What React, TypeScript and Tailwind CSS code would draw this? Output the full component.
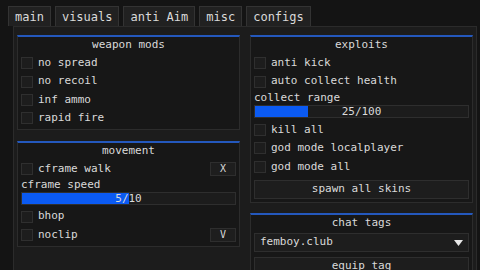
import React from "react";

const Check = ({ label, right }: { label: string; right?: React.ReactNode }) => (
  <div className="flex h-[18.4px] shrink-0 items-center">
    <div className="h-[12px] w-[12px] border border-[#2f2f2f] bg-[#1d1d1d]" />
    <span className="ml-[5px] flex-1">{label}</span>
    {right}
  </div>
);

const Slider = ({ value, max }: { value: number; max: number }) => (
  <div className="relative h-[13px] shrink-0 border border-[#2e2e2e] bg-[#1c1c1c]">
    <div className="h-full bg-[#0b5af2]" style={{ width: `${(value / max) * 100}%` }} />
    <span className="absolute inset-0 flex items-center justify-center leading-none">
      {value}/{max}
    </span>
  </div>
);

const Key = ({ k }: { k: string }) => (
  <div className="flex h-[14px] w-[26px] items-center justify-center border border-[#2e2e2e] bg-[#1e1e1e] text-[10px] leading-none">
    {k}
  </div>
);

const Button = ({ label }: { label: string }) => (
  <div className="flex h-[19px] shrink-0 items-center justify-center border border-[#2e2e2e] bg-[#1d1d1d]">
    {label}
  </div>
);

const Box = ({
  title,
  children,
  className,
}: {
  title: string;
  children: React.ReactNode;
  className?: string;
}) => (
  <div
    className={
      "flex shrink-0 flex-col border border-t-2 border-[#2c2c2c] border-t-[#2458bd] bg-[#171717] px-[3px] " +
      (className ?? "")
    }
  >
    <div className="flex h-[17px] shrink-0 items-center justify-center">{title}</div>
    {children}
  </div>
);

export default function App() {
  const tabs = ["main", "visuals", "anti Aim", "misc", "configs"];
  return (
    <div className="h-[270px] w-[480px] overflow-hidden bg-[#141414] pl-[8px] pt-[6px] font-['DejaVu_Sans_Mono',monospace] text-[11px] text-[#dadada]">
      <div className="flex h-[20px] gap-[4px]">
        {tabs.map((t) => (
          <div
            key={t}
            className="flex items-center border border-b-0 border-[#333] bg-[#212121] px-[6px] text-[12px]"
          >
            {t}
          </div>
        ))}
      </div>
      <div className="ml-[5px] flex h-[260px] w-[464px] gap-[10px] overflow-hidden border border-[#2b2b2b] bg-[#1c1c1c] pl-[3px] pt-[8px]">
        <div className="flex w-[223px] flex-col gap-[11px]">
          <Box title="weapon mods" className="h-[95px]">
            <Check label="no spread" />
            <Check label="no recoil" />
            <Check label="inf ammo" />
            <Check label="rapid fire" />
          </Box>
          <Box title="movement" className="h-[106px]">
            <Check label="cframe walk" right={<Key k="X" />} />
            <div className="flex h-[14px] shrink-0 items-center">cframe speed</div>
            <Slider value={5} max={10} />
            <div className="h-[2px] shrink-0" />
            <Check label="bhop" />
            <Check label="noclip" right={<Key k="V" />} />
          </Box>
        </div>
        <div className="flex w-[223px] flex-col gap-[10px]">
          <Box title="exploits" className="h-[168px]">
            <Check label="anti kick" />
            <Check label="auto collect health" />
            <div className="flex h-[14px] shrink-0 items-center">collect range</div>
            <Slider value={25} max={100} />
            <div className="h-[3px] shrink-0" />
            <Check label="kill all" />
            <Check label="god mode localplayer" />
            <Check label="god mode all" />
            <div className="h-[4px] shrink-0" />
            <Button label="spawn all skins" />
          </Box>
          <Box title="chat tags" className="h-[80px]">
            <div className="mt-[1px] flex h-[19px] shrink-0 items-center justify-between border border-[#2e2e2e] bg-[#1d1d1d] px-[5px]">
              <span>femboy.club</span>
              <svg width="9" height="6" viewBox="0 0 9 6">
                <path d="M0 0 H9 L4.5 6 Z" fill="#e8e8e8" />
              </svg>
            </div>
            <div className="h-[5px] shrink-0" />
            <Button label="equip tag" />
          </Box>
        </div>
      </div>
    </div>
  );
}
